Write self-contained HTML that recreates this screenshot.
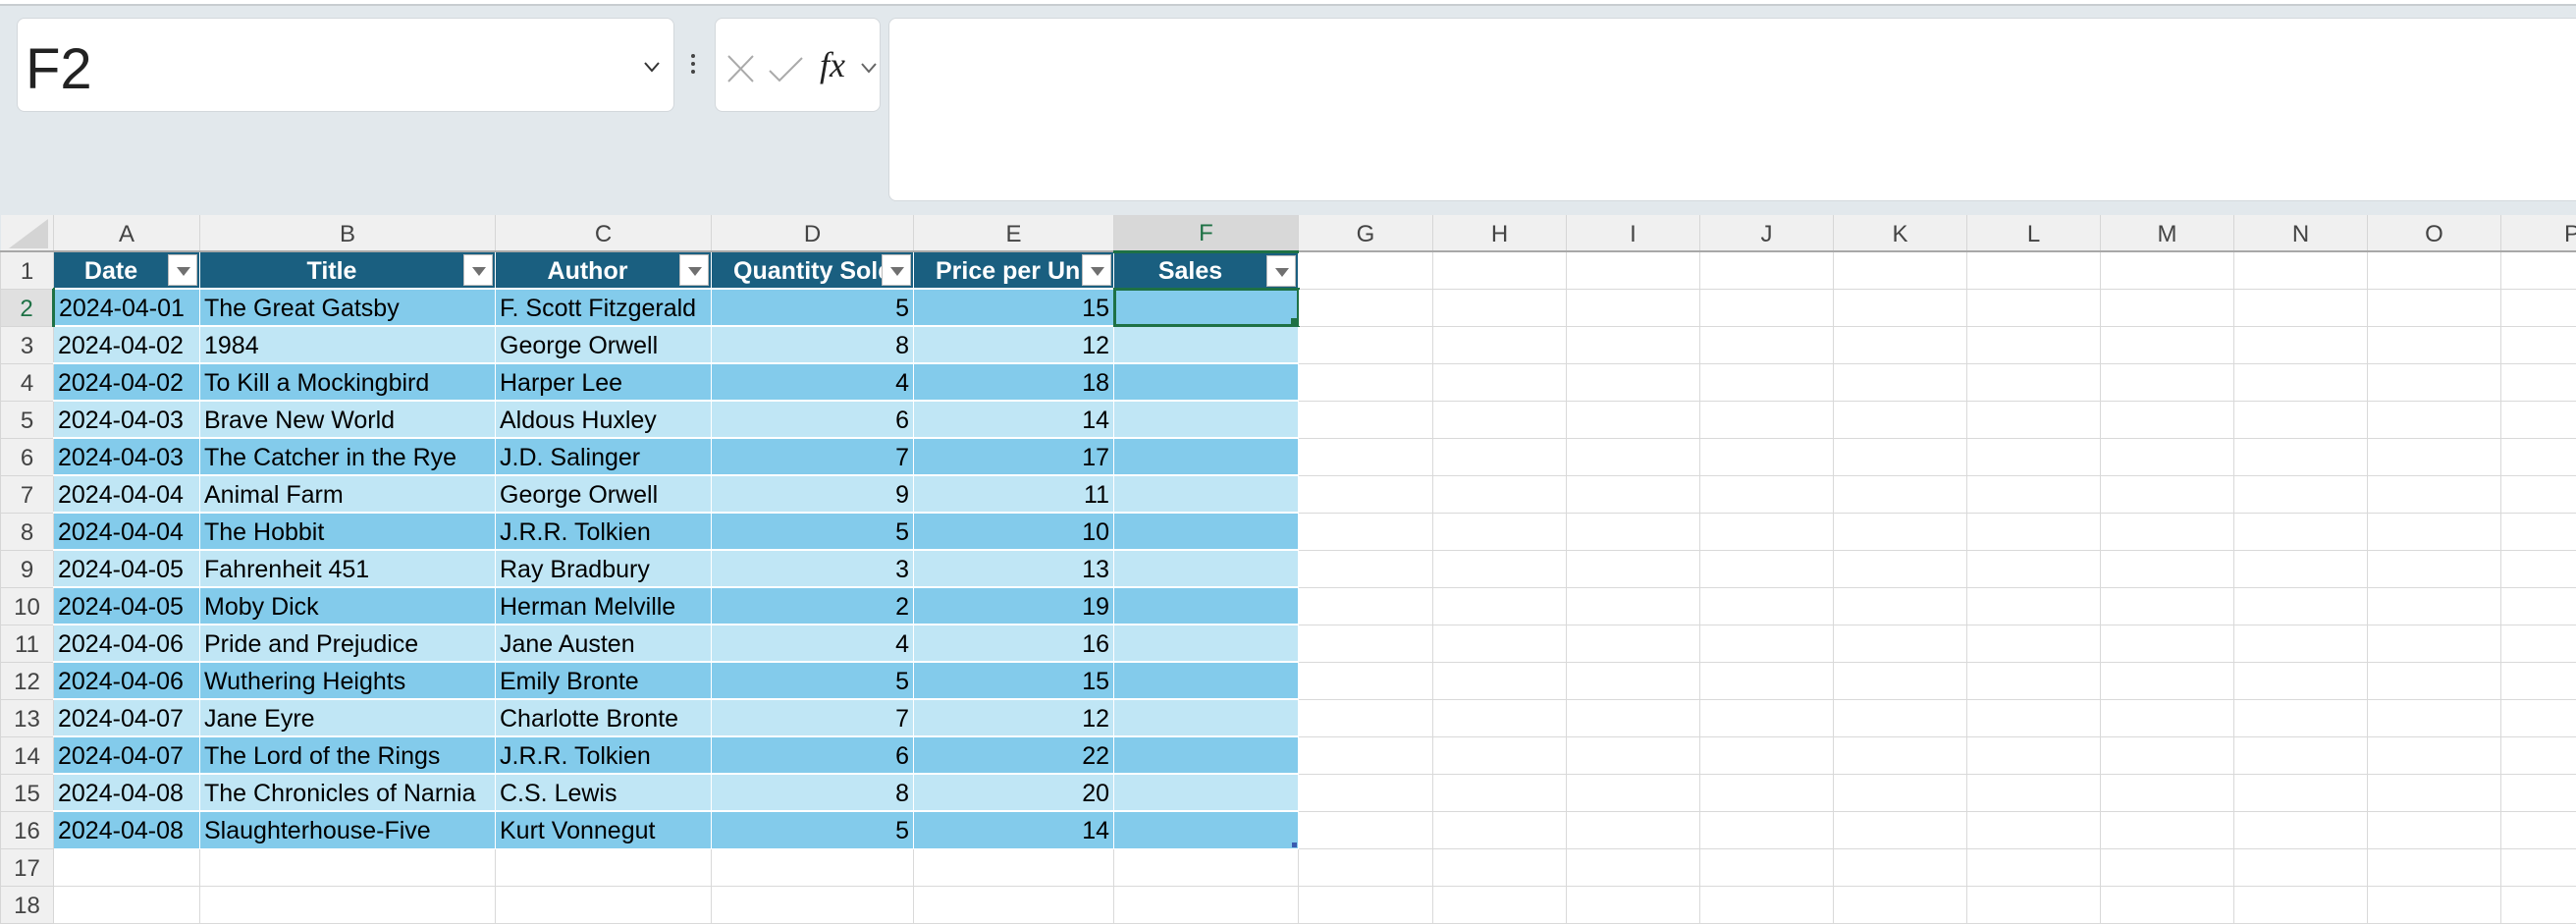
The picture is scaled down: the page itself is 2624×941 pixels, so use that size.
<!DOCTYPE html>
<html><head><meta charset="utf-8"><style>
*{margin:0;padding:0;box-sizing:border-box}
body{width:2624px;height:936px;overflow:hidden;background:#e2e8ec;font-family:"Liberation Sans",Arial,sans-serif;position:relative}
.topbar{position:absolute;left:0;top:0;width:2624px;height:6px;background:#fff;border-bottom:2px solid #c8cdd0}
.box{position:absolute;background:#fff;border:1px solid #d3d8dc;border-radius:8px}
table{position:absolute;left:0;top:219px;border-collapse:collapse;table-layout:fixed;width:2624px;font-size:25px}
td{height:38px;border:1px solid #d9d9d9;padding:3px 4px 0;white-space:nowrap;overflow:hidden;position:relative;background:#fff;color:#000}
tr.ch td{height:37px;background:#f0f0f0;color:#444;text-align:center;font-size:24px;border:none;border-right:1px solid #d6d6d6;border-bottom:2px solid #a8a8a8}
td.rn{background:#f0f0f0;color:#444;text-align:center;font-size:24px;padding:3px 0 0;border-color:#d6d6d6}
tr.h td.c{background:#1a5f80;color:#fff;font-weight:bold;text-align:center;border:1px solid #fff;padding-right:36px}
.fb{position:absolute;right:2px;top:2px;width:30px;height:32px;background:#fff;border:1px solid #bbb}
.fb:after{content:"";position:absolute;left:8px;top:12px;border-left:7px solid transparent;border-right:7px solid transparent;border-top:9px solid #707070}
tr.d td.c{background:#83cbeb;border:1px solid #fff;border-top:2px solid #fff}
tr.l td.c{background:#c0e6f5;border:1px solid #fff;border-top:2px solid #fff}
.r{text-align:right}
</style></head><body>
<div class="topbar"></div>
<div class="box" style="left:17px;top:18px;width:670px;height:96px"><span style="position:absolute;left:8px;top:18px;font-size:58px;color:#222">F2</span>
<svg style="position:absolute;left:637px;top:43px" width="18" height="12"><path d="M2 2 L9 10 L16 2" stroke="#333" stroke-width="2" fill="none"/></svg></div>
<div style="position:absolute;left:704px;top:55px;width:4px;height:4px;background:#444;border-radius:2px;box-shadow:0 8px 0 #444,0 16px 0 #444"></div>
<div class="box" style="left:728px;top:18px;width:169px;height:96px">
<svg style="position:absolute;left:10px;top:36px" width="85" height="30"><path d="M3 2 L28 28 M28 2 L3 28" stroke="#aaa" stroke-width="2" fill="none"/><path d="M45 17 L55 27 L78 4" stroke="#aaa" stroke-width="2" fill="none"/></svg>
<span style="position:absolute;left:106px;top:26px;font-family:'Liberation Serif',serif;font-style:italic;font-size:36px;color:#222">fx</span>
<svg style="position:absolute;left:147px;top:44px" width="18" height="12"><path d="M2 2 L9 10 L16 2" stroke="#666" stroke-width="2" fill="none"/></svg></div>
<div class="box" style="left:905px;top:18px;width:1740px;height:187px"></div>
<table>
<colgroup><col style="width:54px"><col style="width:149px"><col style="width:301px"><col style="width:220px"><col style="width:206px"><col style="width:204px"><col style="width:188px"><col style="width:137px"><col style="width:136px"><col style="width:136px"><col style="width:136px"><col style="width:136px"><col style="width:136px"><col style="width:136px"><col style="width:136px"><col style="width:136px"><col style="width:77px"></colgroup>
<tr class="ch"><td style="border-bottom-color:#a8a8a8"><svg width="46" height="36" style="position:absolute;left:4px;top:0"><path d="M4 34 L44 34 L44 4 Z" fill="#d4d4d4"/></svg></td><td>A</td><td>B</td><td>C</td><td>D</td><td>E</td><td style="background:#d8d8d8;color:#1e7145;border-bottom:3px solid #1e7145">F</td><td>G</td><td>H</td><td>I</td><td>J</td><td>K</td><td>L</td><td>M</td><td>N</td><td>O</td><td style="text-align:left;padding-left:64px">P</td></tr>
<tr class="h"><td class="rn">1</td><td class="c">Date<span class="fb"></span></td><td class="c">Title<span class="fb"></span></td><td class="c">Author<span class="fb"></span></td><td class="c" style="text-align:left;padding-left:22px">Quantity Sold<span class="fb"></span></td><td class="c" style="text-align:left;padding-left:22px">Price per Unit<span class="fb"></span></td><td class="c">Sales<span class="fb"></span></td><td></td><td></td><td></td><td></td><td></td><td></td><td></td><td></td><td></td><td></td></tr>
<tr class="d"><td class="rn" style="color:#1e7145;background:#e0e0e0;border-right:3px solid #1e7145">2</td><td class="c">2024-04-01</td><td class="c">The Great Gatsby</td><td class="c">F. Scott Fitzgerald</td><td class="c r">5</td><td class="c r">15</td><td class="c" style="outline:3px solid #1e7145;outline-offset:-2px"><span style="position:absolute;right:-1px;bottom:-1px;width:8px;height:8px;background:#1e7145"></span></td><td></td><td></td><td></td><td></td><td></td><td></td><td></td><td></td><td></td><td></td></tr>
<tr class="l"><td class="rn">3</td><td class="c">2024-04-02</td><td class="c">1984</td><td class="c">George Orwell</td><td class="c r">8</td><td class="c r">12</td><td class="c"></td><td></td><td></td><td></td><td></td><td></td><td></td><td></td><td></td><td></td><td></td></tr>
<tr class="d"><td class="rn">4</td><td class="c">2024-04-02</td><td class="c">To Kill a Mockingbird</td><td class="c">Harper Lee</td><td class="c r">4</td><td class="c r">18</td><td class="c"></td><td></td><td></td><td></td><td></td><td></td><td></td><td></td><td></td><td></td><td></td></tr>
<tr class="l"><td class="rn">5</td><td class="c">2024-04-03</td><td class="c">Brave New World</td><td class="c">Aldous Huxley</td><td class="c r">6</td><td class="c r">14</td><td class="c"></td><td></td><td></td><td></td><td></td><td></td><td></td><td></td><td></td><td></td><td></td></tr>
<tr class="d"><td class="rn">6</td><td class="c">2024-04-03</td><td class="c">The Catcher in the Rye</td><td class="c">J.D. Salinger</td><td class="c r">7</td><td class="c r">17</td><td class="c"></td><td></td><td></td><td></td><td></td><td></td><td></td><td></td><td></td><td></td><td></td></tr>
<tr class="l"><td class="rn">7</td><td class="c">2024-04-04</td><td class="c">Animal Farm</td><td class="c">George Orwell</td><td class="c r">9</td><td class="c r">11</td><td class="c"></td><td></td><td></td><td></td><td></td><td></td><td></td><td></td><td></td><td></td><td></td></tr>
<tr class="d"><td class="rn">8</td><td class="c">2024-04-04</td><td class="c">The Hobbit</td><td class="c">J.R.R. Tolkien</td><td class="c r">5</td><td class="c r">10</td><td class="c"></td><td></td><td></td><td></td><td></td><td></td><td></td><td></td><td></td><td></td><td></td></tr>
<tr class="l"><td class="rn">9</td><td class="c">2024-04-05</td><td class="c">Fahrenheit 451</td><td class="c">Ray Bradbury</td><td class="c r">3</td><td class="c r">13</td><td class="c"></td><td></td><td></td><td></td><td></td><td></td><td></td><td></td><td></td><td></td><td></td></tr>
<tr class="d"><td class="rn">10</td><td class="c">2024-04-05</td><td class="c">Moby Dick</td><td class="c">Herman Melville</td><td class="c r">2</td><td class="c r">19</td><td class="c"></td><td></td><td></td><td></td><td></td><td></td><td></td><td></td><td></td><td></td><td></td></tr>
<tr class="l"><td class="rn">11</td><td class="c">2024-04-06</td><td class="c">Pride and Prejudice</td><td class="c">Jane Austen</td><td class="c r">4</td><td class="c r">16</td><td class="c"></td><td></td><td></td><td></td><td></td><td></td><td></td><td></td><td></td><td></td><td></td></tr>
<tr class="d"><td class="rn">12</td><td class="c">2024-04-06</td><td class="c">Wuthering Heights</td><td class="c">Emily Bronte</td><td class="c r">5</td><td class="c r">15</td><td class="c"></td><td></td><td></td><td></td><td></td><td></td><td></td><td></td><td></td><td></td><td></td></tr>
<tr class="l"><td class="rn">13</td><td class="c">2024-04-07</td><td class="c">Jane Eyre</td><td class="c">Charlotte Bronte</td><td class="c r">7</td><td class="c r">12</td><td class="c"></td><td></td><td></td><td></td><td></td><td></td><td></td><td></td><td></td><td></td><td></td></tr>
<tr class="d"><td class="rn">14</td><td class="c">2024-04-07</td><td class="c">The Lord of the Rings</td><td class="c">J.R.R. Tolkien</td><td class="c r">6</td><td class="c r">22</td><td class="c"></td><td></td><td></td><td></td><td></td><td></td><td></td><td></td><td></td><td></td><td></td></tr>
<tr class="l"><td class="rn">15</td><td class="c">2024-04-08</td><td class="c">The Chronicles of Narnia</td><td class="c">C.S. Lewis</td><td class="c r">8</td><td class="c r">20</td><td class="c"></td><td></td><td></td><td></td><td></td><td></td><td></td><td></td><td></td><td></td><td></td></tr>
<tr class="d"><td class="rn">16</td><td class="c">2024-04-08</td><td class="c">Slaughterhouse-Five</td><td class="c">Kurt Vonnegut</td><td class="c r">5</td><td class="c r">14</td><td class="c"><span style="position:absolute;right:1px;bottom:1px;width:5px;height:5px;background:#3a5bb0"></span></td><td></td><td></td><td></td><td></td><td></td><td></td><td></td><td></td><td></td><td></td></tr>
<tr><td class="rn">17</td><td></td><td></td><td></td><td></td><td></td><td></td><td></td><td></td><td></td><td></td><td></td><td></td><td></td><td></td><td></td><td></td></tr>
<tr><td class="rn">18</td><td></td><td></td><td></td><td></td><td></td><td></td><td></td><td></td><td></td><td></td><td></td><td></td><td></td><td></td><td></td><td></td></tr>
</table>
</body></html>
